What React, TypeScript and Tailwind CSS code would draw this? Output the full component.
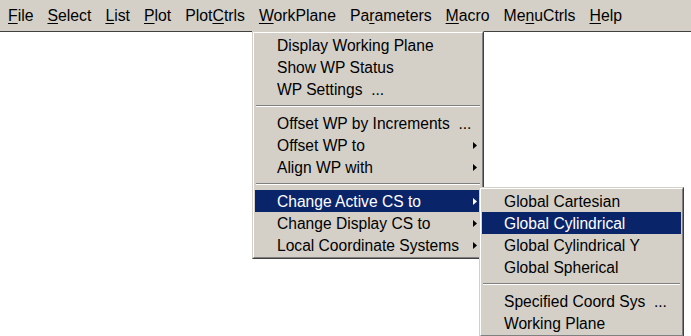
import React from 'react';

type Entry = { label: string; arrow?: boolean; active?: boolean } | 'sep';

const menuBar: { pre: string; key: string; post: string }[] = [
  { pre: '', key: 'F', post: 'ile' },
  { pre: '', key: 'S', post: 'elect' },
  { pre: '', key: 'L', post: 'ist' },
  { pre: '', key: 'P', post: 'lot' },
  { pre: 'Plot', key: 'C', post: 'trls' },
  { pre: '', key: 'W', post: 'orkPlane' },
  { pre: 'Pa', key: 'r', post: 'ameters' },
  { pre: '', key: 'M', post: 'acro' },
  { pre: 'Me', key: 'n', post: 'uCtrls' },
  { pre: '', key: 'H', post: 'elp' },
];

const workPlaneItems: Entry[] = [
  { label: 'Display Working Plane' },
  { label: 'Show WP Status' },
  { label: 'WP Settings  ...' },
  'sep',
  { label: 'Offset WP by Increments  ...' },
  { label: 'Offset WP to', arrow: true },
  { label: 'Align WP with', arrow: true },
  'sep',
  { label: 'Change Active CS to', arrow: true, active: true },
  { label: 'Change Display CS to', arrow: true },
  { label: 'Local Coordinate Systems', arrow: true },
];

const csItems: Entry[] = [
  { label: 'Global Cartesian' },
  { label: 'Global Cylindrical', active: true },
  { label: 'Global Cylindrical Y' },
  { label: 'Global Spherical' },
  'sep',
  { label: 'Specified Coord Sys  ...' },
  { label: 'Working Plane' },
];

function Arrow({ white }: { white?: boolean }) {
  return (
    <svg width="4" height="7" viewBox="0 0 4 7" className="shrink-0">
      <path d="M0 0 L4 3.5 L0 7 Z" fill={white ? '#ffffff' : '#000000'} />
    </svg>
  );
}

function MenuBox({ items, className }: { items: Entry[]; className: string }) {
  return (
    <div
      className={`absolute border border-t-[#d4d0c8] border-l-[#d4d0c8] border-r-[#404040] border-b-[#404040] ${className}`}
    >
      <div className="border border-t-white border-l-white border-r-[#808080] border-b-[#808080] bg-[#d4d0c8] p-[1px]">
        {items.map((it, i) =>
          it === 'sep' ? (
            <div key={i} className="flex h-[12px] flex-col justify-center px-[1px]">
              <div className="h-[1px] bg-[#808080]" />
              <div className="h-[1px] bg-white" />
            </div>
          ) : (
            <div
              key={i}
              className={`flex h-[22px] items-center justify-between pl-[22px] pr-[4px] pt-[1px] ${
                it.active ? 'bg-[#0a246a] text-white' : 'text-black'
              }`}
            >
              <span className="whitespace-pre">{it.label}</span>
              {it.arrow && <Arrow white={it.active} />}
            </div>
          )
        )}
      </div>
    </div>
  );
}

export default function App() {
  return (
    <div
      className="relative h-[336px] w-[691px] overflow-hidden bg-white text-[15.6px] leading-none"
      style={{ fontFamily: '"Liberation Sans", Arial, sans-serif' }}
    >
      {/* Menu bar */}
      <div className="flex h-[32px] items-center border-b border-[#404040] bg-[#d4d0c8] pl-[1px] text-[15.8px]">
        {menuBar.map((m) => (
          <div key={m.pre + m.key + m.post} className="px-[7px] text-black">
            {m.pre}
            <span className="underline underline-offset-2">{m.key}</span>
            {m.post}
          </div>
        ))}
      </div>

      {/* WorkPlane dropdown */}
      <MenuBox items={workPlaneItems} className="left-[252px] top-[31px] w-[232px]" />

      {/* Change Active CS to submenu */}
      <MenuBox items={csItems} className="left-[479px] top-[187px] w-[205px]" />
    </div>
  );
}
